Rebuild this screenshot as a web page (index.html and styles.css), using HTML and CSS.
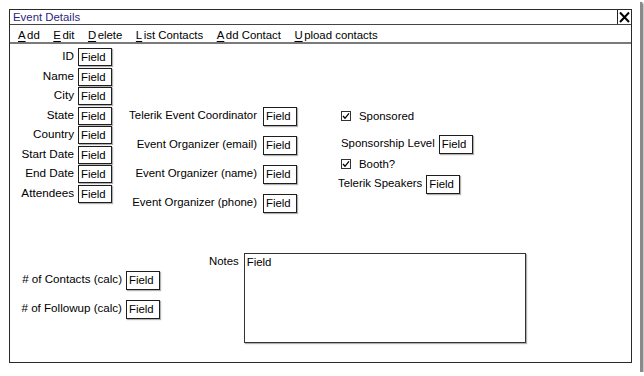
FILE: index.html
```html
<!DOCTYPE html>
<html>
<head>
<meta charset="utf-8">
<title>Event Details</title>
<link rel="stylesheet" href="styles.css">
</head>
<body>
<div class="page">
  <div class="window">
    <div class="titlebar">
      <span class="title">Event Details</span>
      <span class="close"><svg width="13" height="14" viewBox="0 0 13 14"><path d="M2 2.5 L11 12 M11 2.5 L2 12" stroke="#000" stroke-width="2" fill="none"/></svg></span>
    </div>
    <div class="menubar">
      <span class="mi"><u>A</u>dd</span>
      <span class="mi"><u>E</u>dit</span>
      <span class="mi"><u>D</u>elete</span>
      <span class="mi"><u>L</u>ist Contacts</span>
      <span class="mi"><u>A</u>dd Contact</span>
      <span class="mi"><u>U</u>pload contacts</span>
    </div>
    <div class="body">
      <div class="top">
        <div class="grid col1">
          <span class="lbl">ID</span><span class="field">Field</span>
          <span class="lbl">Name</span><span class="field">Field</span>
          <span class="lbl">City</span><span class="field">Field</span>
          <span class="lbl">State</span><span class="field">Field</span>
          <span class="lbl">Country</span><span class="field">Field</span>
          <span class="lbl">Start Date</span><span class="field">Field</span>
          <span class="lbl">End Date</span><span class="field">Field</span>
          <span class="lbl">Attendees</span><span class="field">Field</span>
        </div>
        <div class="grid col2">
          <span class="lbl">Telerik Event Coordinator</span><span class="field">Field</span>
          <span class="lbl">Event Organizer (email)</span><span class="field">Field</span>
          <span class="lbl">Event Organizer (name)</span><span class="field">Field</span>
          <span class="lbl">Event Organizer (phone)</span><span class="field">Field</span>
        </div>
        <div class="col3">
          <div class="row check sponsored">
            <span class="box"><svg width="8" height="8" viewBox="0 0 8 8"><path d="M1 4 L3 6.3 L7 1.3" stroke="#000" stroke-width="1.3" fill="none"/></svg></span>
            <span class="ctext">Sponsored</span>
          </div>
          <div class="row inline level">
            <span class="lbl">Sponsorship Level</span><span class="field">Field</span>
          </div>
          <div class="row check booth">
            <span class="box"><svg width="8" height="8" viewBox="0 0 8 8"><path d="M1 4 L3 6.3 L7 1.3" stroke="#000" stroke-width="1.3" fill="none"/></svg></span>
            <span class="ctext">Booth?</span>
          </div>
          <div class="row inline speakers">
            <span class="lbl">Telerik Speakers</span><span class="field">Field</span>
          </div>
        </div>
      </div>
      <div class="bottom">
        <div class="grid calc">
          <span class="lbl"># of Contacts (calc)</span><span class="field">Field</span>
          <span class="lbl"># of Followup (calc)</span><span class="field">Field</span>
        </div>
        <div class="notes">
          <span class="lbl">Notes</span>
          <div class="textarea">Field</div>
        </div>
      </div>
    </div>
  </div>
</div>
</body>
</html>
```

FILE: styles.css
```css
html, body {
  margin: 0;
  padding: 0;
  background: #fff;
}
body {
  font-family: "Liberation Sans", Arial, sans-serif;
  font-size: 11.4px;
  color: #000;
}
.page {
  width: 640px;
  height: 372px;
  box-sizing: border-box;
  padding: 9px 0 0 9px;
  background: #fff;
  box-shadow: 2px 2px 0 #8a8a8a, 3px 3px 2px #555;
}
.window {
  width: 623px;
  height: 354px;
  box-sizing: border-box;
  border: 1px solid #2a2a2a;
  display: flex;
  flex-direction: column;
}
.titlebar {
  height: 15px;
  box-sizing: border-box;
  border-bottom: 1px solid #444;
  display: flex;
  align-items: center;
  justify-content: space-between;
}
.title {
  color: #2d1f80;
  padding-left: 3px;
  line-height: 14px;
}
.close {
  width: 14px;
  height: 14px;
  box-sizing: border-box;
  border-left: 1px solid #222;
  display: flex;
  align-items: center;
  justify-content: center;
}
.menubar {
  height: 19px;
  box-sizing: border-box;
  border-bottom: 2px solid #7a7a7a;
  display: flex;
  align-items: center;
  gap: 13.5px;
  padding-left: 8px;
  padding-top: 2px;
  font-size: 11.4px;
}
.mi u {
  margin-right: 1.5px;
  text-underline-offset: 2px;
}
.body {
  padding-top: 4px;
}
.top {
  display: flex;
  align-items: flex-start;
}
.grid {
  display: grid;
  column-gap: 4px;
}
.lbl {
  text-align: right;
  line-height: 14px;
  white-space: nowrap;
}
.grid .lbl {
  align-self: start;
  margin-top: 1px;
}
.field {
  box-sizing: border-box;
  width: 34px;
  height: 19px;
  border: 1px solid #1e1e1e;
  box-shadow: 1px 1px 1px rgba(0, 0, 0, 0.3);
  padding: 0 2px;
  line-height: 17px;
  background: #fff;
}
.col1 {
  grid-template-columns: 64px 34px;
  row-gap: 1.5px;
  font-size: 11.7px;
}
.col1 .field {
  height: 18px;
  line-height: 16px;
  font-size: 11.4px;
}
.col2 {
  margin-left: 5px;
  padding-top: 59px;
  grid-template-columns: 140px 34px;
  column-gap: 6px;
  row-gap: 10px;
}
.col3 {
  margin-left: 41px;
  padding-top: 60px;
  display: flex;
  flex-direction: column;
}
.row {
  display: flex;
  align-items: center;
}
.check {
  height: 16px;
  padding-left: 3px;
}
.box {
  width: 10px;
  height: 10px;
  box-sizing: border-box;
  border: 1px solid #333;
  display: flex;
  align-items: center;
  justify-content: center;
  margin-right: 8px;
}
.inline {
  gap: 4px;
  align-items: flex-start;
}
.inline .lbl {
  margin-top: 1px;
}
.level {
  margin-top: 11px;
  padding-left: 3px;
}
.booth {
  margin-top: 2px;
}
.speakers {
  margin-top: 3px;
}
.bottom {
  margin-top: 40px;
  display: flex;
  align-items: flex-start;
}
.calc {
  padding-top: 18px;
  grid-template-columns: 112px 34px;
  row-gap: 10px;
  font-size: 11.6px;
}
.calc .field {
  font-size: 11.4px;
}
.notes {
  margin-left: 49px;
  display: flex;
  align-items: flex-start;
  gap: 5px;
}
.notes .lbl {
  margin-top: 1px;
}
.textarea {
  width: 282px;
  height: 90px;
  box-sizing: border-box;
  border: 1px solid #333;
  box-shadow: 1px 1px 1px rgba(0, 0, 0, 0.3);
  padding: 1px 2px;
  line-height: 15px;
}
```
